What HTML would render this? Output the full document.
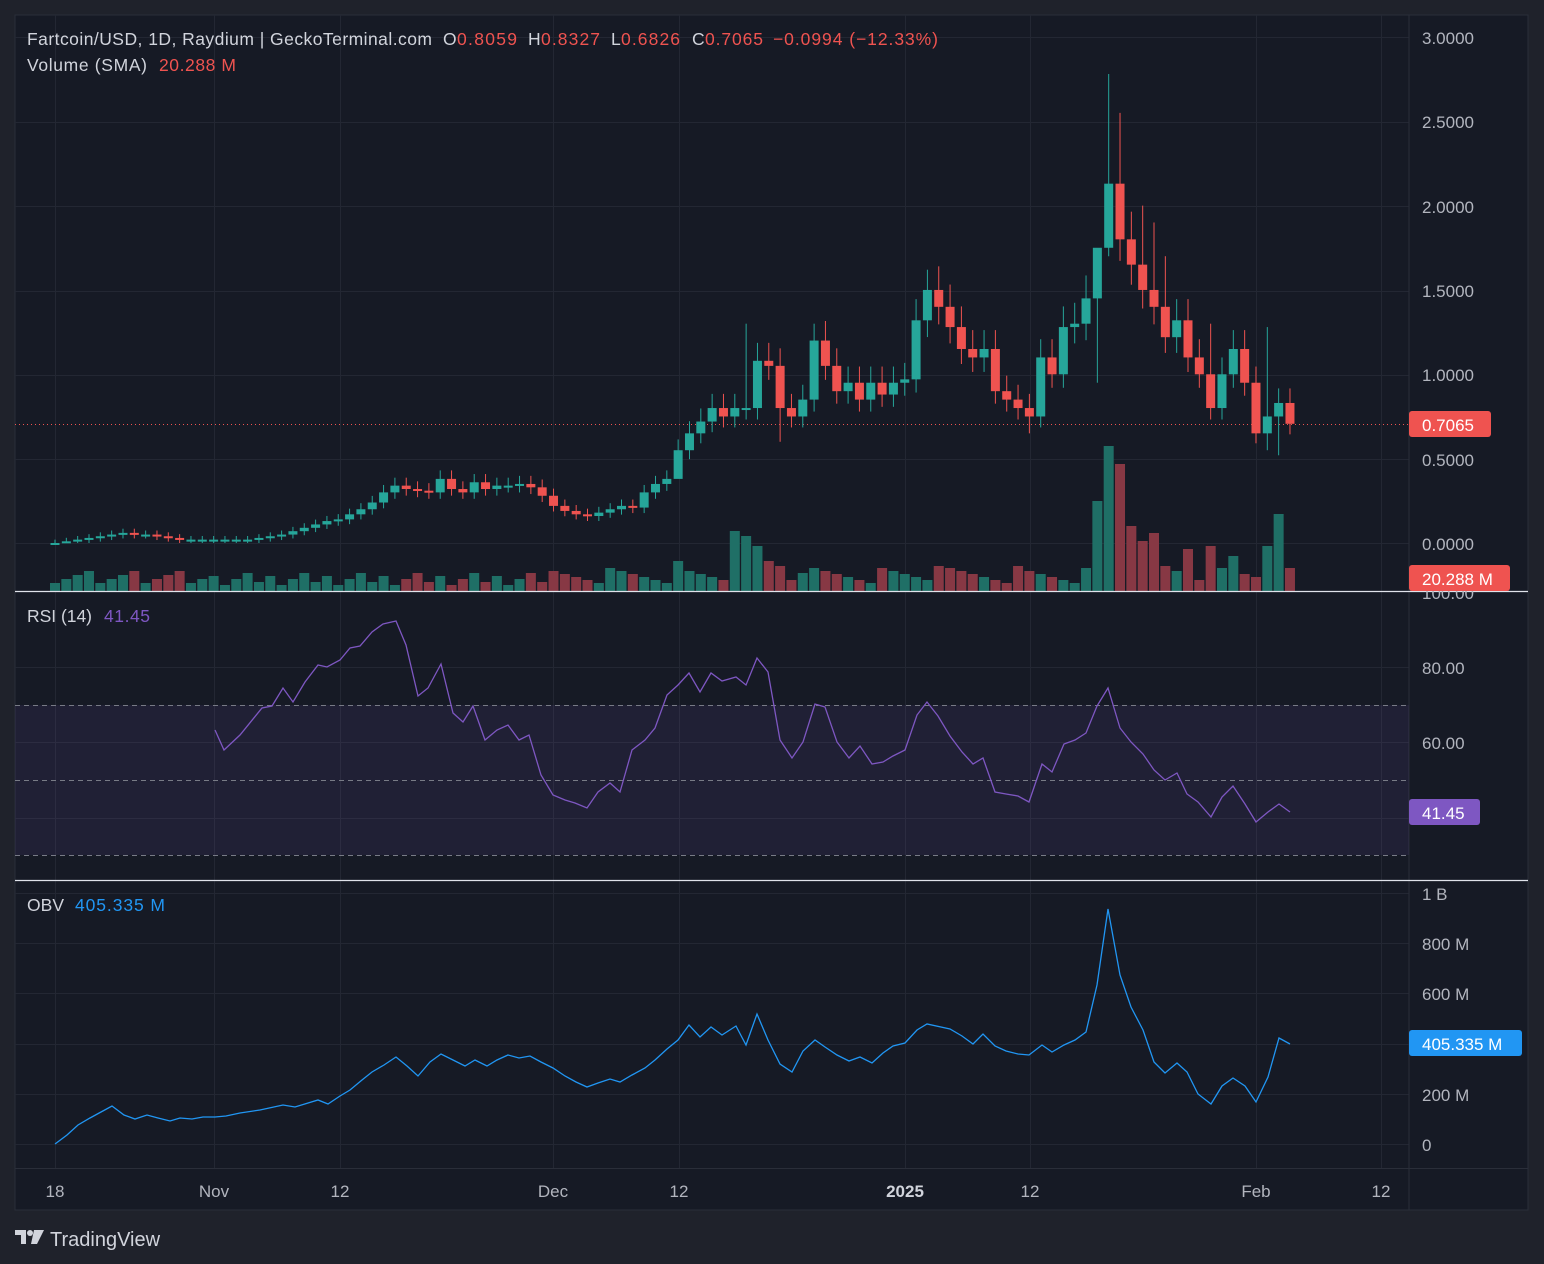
<!DOCTYPE html>
<html><head><meta charset="utf-8">
<style>
html,body{margin:0;padding:0;background:#1f222b;width:1544px;height:1264px;overflow:hidden;font-family:"Liberation Sans",Arial,sans-serif}
svg{position:absolute;left:0;top:0}
</style></head><body>
<svg id="s" width="1544" height="1264" xmlns="http://www.w3.org/2000/svg" font-family="Liberation Sans, Arial, sans-serif">
<rect x="0" y="0" width="1544" height="1264" fill="#1f222b"/>
<rect x="15" y="15" width="1513" height="1195" fill="#161a25" stroke="#2a2e39"/>
<g id="grid" stroke="#232733" stroke-width="1"></g>
<line x1="1409" y1="15" x2="1409" y2="1210" stroke="#2a2e39"/>
<line x1="15" y1="1168.5" x2="1528" y2="1168.5" stroke="#2a2e39"/>
<rect x="15" y="705" width="1394" height="150" fill="#7e57c2" fill-opacity="0.1"/>
<g stroke="#787b86" stroke-dasharray="5,4" stroke-width="1">
<line x1="15" y1="705.5" x2="1409" y2="705.5"/><line x1="15" y1="780.5" x2="1409" y2="780.5"/><line x1="15" y1="855.5" x2="1409" y2="855.5"/>
</g>
<g id="vol"></g>
<line x1="15" y1="424.5" x2="1409" y2="424.5" stroke="#ef5350" stroke-dasharray="1,3"/>
<g id="candles"></g>
<polyline id="rsi" fill="none" stroke="#7e57c2" stroke-width="1.3"/>
<polyline id="obv" fill="none" stroke="#2196f3" stroke-width="1.3"/>
<line x1="15" y1="591.5" x2="1528" y2="591.5" stroke="#e0e3eb" stroke-width="1.3"/>
<line x1="15" y1="880.5" x2="1528" y2="880.5" stroke="#e0e3eb" stroke-width="1.3"/>
<g font-size="17" fill="#b2b5be">
<text x="1422" y="44">3.0000</text><text x="1422" y="128">2.5000</text><text x="1422" y="213">2.0000</text>
<text x="1422" y="297">1.5000</text><text x="1422" y="381">1.0000</text><text x="1422" y="466">0.5000</text>
<text x="1422" y="550">0.0000</text><text x="1422" y="599">100.00</text>
<text x="1422" y="674">80.00</text><text x="1422" y="749">60.00</text>
<text x="1422" y="900">1 B</text><text x="1422" y="950">800 M</text><text x="1422" y="1000">600 M</text>
<text x="1422" y="1101">200 M</text><text x="1422" y="1151">0</text>
</g>
<rect x="1409" y="411" width="82" height="26" rx="3" fill="#ef5350"/>
<text x="1422" y="431" font-size="17" fill="#fff">0.7065</text>
<rect x="1409" y="565" width="101" height="26" rx="3" fill="#ef5350"/>
<text x="1422" y="585" font-size="17" fill="#fff">20.288 M</text>
<rect x="1409" y="799" width="71" height="26" rx="3" fill="#7e57c2"/>
<text x="1422" y="819" font-size="17" fill="#fff">41.45</text>
<rect x="1409" y="1030" width="113" height="26" rx="3" fill="#2196f3"/>
<text x="1422" y="1050" font-size="17" fill="#fff">405.335 M</text>
<g font-size="17" fill="#b2b5be" text-anchor="middle">
<text x="55" y="1197">18</text><text x="214" y="1197">Nov</text><text x="340" y="1197">12</text>
<text x="553" y="1197">Dec</text><text x="679" y="1197">12</text>
<text x="905" y="1197" font-weight="bold" fill="#d1d4dc">2025</text>
<text x="1030" y="1197">12</text><text x="1256" y="1197">Feb</text><text x="1381" y="1197">12</text>
</g>
<g font-size="17.5" fill="#d1d4dc">
<text x="27" y="45" textLength="405" lengthAdjust="spacing">Fartcoin/USD, 1D, Raydium | GeckoTerminal.com</text>
<text x="443" y="45">O</text><text x="457" y="45" fill="#ef5350" textLength="60">0.8059</text>
<text x="528" y="45">H</text><text x="541" y="45" fill="#ef5350" textLength="59">0.8327</text>
<text x="611" y="45">L</text><text x="621" y="45" fill="#ef5350" textLength="59">0.6826</text>
<text x="692" y="45">C</text><text x="705" y="45" fill="#ef5350" textLength="58">0.7065</text>
<text x="773" y="45" fill="#ef5350" textLength="165" lengthAdjust="spacing">−0.0994 (−12.33%)</text>
<text x="27" y="71" textLength="120" lengthAdjust="spacing">Volume (SMA)</text>
<text x="159" y="71" fill="#ef5350" textLength="77" lengthAdjust="spacing">20.288 M</text>
<text x="27" y="622" textLength="65" lengthAdjust="spacing">RSI (14)</text>
<text x="104" y="622" fill="#7e57c2" textLength="46">41.45</text>
<text x="27" y="911" textLength="37">OBV</text>
<text x="75" y="911" fill="#2196f3" textLength="90" lengthAdjust="spacing">405.335 M</text>
</g>
<g fill="#d1d4dc">
<path d="M15 1230h11v14h-5v-9h-6z"/>
<circle cx="30" cy="1233" r="3"/>
<path d="M34 1230h10l-7 14h-6z"/>
<text x="50" y="1246" font-size="20">TradingView</text>
</g>
</svg>
<script>
var NS="http://www.w3.org/2000/svg";
function el(p,t,a){var e=document.createElementNS(NS,t);for(var k in a)e.setAttribute(k,a[k]);p.appendChild(e);return e;}
(function(){
var gg=document.getElementById('grid');
[55,214,340,553,679,905,1030,1256,1381].forEach(function(x){el(gg,'line',{x1:x+.5,y1:15,x2:x+.5,y2:1168});});
[37,122,206,291,375,459,543,667,742,818,893,943,993,1044,1094,1144].forEach(function(y){el(gg,'line',{x1:15,y1:y+.5,x2:1409,y2:y+.5});});
var c=[0.00,0.01,0.02,0.03,0.04,0.05,0.06,0.05,0.05,0.04,0.03,0.02,0.02,0.02,
0.02,0.02,0.02,0.02,0.03,0.04,0.05,0.07,0.09,0.11,0.13,
0.14,0.17,0.20,0.24,0.30,0.34,0.32,0.31,0.30,0.38,0.32,0.30,0.36,0.32,0.34,0.34,0.35,0.33,0.28,
0.22,0.19,0.17,0.16,0.18,0.20,0.22,0.21,0.30,0.35,0.38,
0.55,0.65,0.72,0.80,0.75,0.80,0.80,1.08,1.05,0.80,0.75,0.85,1.20,1.05,0.90,0.95,0.85,0.95,0.88,0.95,
0.97,1.32,1.50,1.40,1.28,1.15,1.10,1.15,0.90,0.85,0.80,0.75,1.10,1.00,1.28,1.30,1.45,1.75,2.13,1.80,1.65,1.50,1.40,1.22,1.32,1.10,1.00,0.80,1.00,1.15,0.95,0.65,0.75,0.83,0.7065];
var hi={93:2.78,94:2.55,92:1.65,61:1.3,67:1.3,77:1.62,96:2.0,97:1.9,98:1.7,102:1.3,107:1.28};
var lo={92:0.95,93:1.7,55:0.5,64:0.6,86:0.65,107:0.55,108:0.52};
function Y(p){return 543-p*168.7;}
var cg=document.getElementById('candles'),vg=document.getElementById('vol');
var vh={93:145,94:127,92:90,95:65,96:50,97:58,98:25,99:20,100:42,102:45,104:35,107:45,108:77,60:60,61:55,62:45,63:30,64:25,55:30,56:20,66:18,78:25,85:25};
for(var i=0;i<c.length;i++){
 var x=55+i*11.33,o=i?c[i-1]:0,cl=c[i],up=cl>=o;
 var col=up?'#26a69a':'#ef5350';
 var tp=Math.max(o,cl),bt=Math.min(o,cl);
 var h=(i in hi)?hi[i]:tp+0.02+tp*0.08;
 var l=(i in lo)?lo[i]:Math.max(0,bt-0.02-bt*0.06);
 el(cg,'line',{x1:x,y1:Y(h),x2:x,y2:Y(l),stroke:col,'stroke-width':1});
 var y1=Y(tp),y2=Y(bt);if(y2-y1<2)y2=y1+2;
 el(cg,'rect',{x:x-4.5,y:y1,width:9,height:y2-y1,fill:col});
 var v=(i in vh)?vh[i]:(i<14?8+(i%4)*4:(i<44?6+((i*7)%5)*3:8+((i*5)%6)*3));
 el(vg,'rect',{x:x-5,y:591-v,width:10,height:v,fill:up?'#1f6f66':'#873844'});
}
var r=[[215,730],[224,750],[240,735],[262,708],[272,706],[283,688],[293,702],[305,682],[318,665],[327,667],[340,660],[350,648],[360,646],[372,632],[383,624],[396,621],[406,645],[418,696],[428,688],[441,664],[453,713],[463,722],[473,706],[485,740],[497,730],[508,725],[519,740],[529,735],[541,775],[553,795],[565,800],[575,803],[587,808],[598,792],[610,783],[620,792],[632,750],[645,740],[655,728],[667,695],[678,685],[689,673],[700,692],[711,673],[722,681],[736,677],[746,685],[757,658],[768,672],[780,740],[792,758],[803,742],[815,704],[825,707],[837,742],[849,758],[860,746],[872,764],[883,762],[893,756],[905,750],[917,715],[927,702],[938,716],[950,736],[962,752],[973,764],[983,758],[995,792],[1006,794],[1018,796],[1029,802],[1042,764],[1052,772],[1064,744],[1075,740],[1086,733],[1097,706],[1108,688],[1120,728],[1131,742],[1143,754],[1154,770],[1165,780],[1177,773],[1187,794],[1198,802],[1211,817],[1222,797],[1233,786],[1245,804],[1256,822],[1268,812],[1279,804],[1290,812]];
document.getElementById('rsi').setAttribute('points',r.join(' '));
var ob=[[55,1144],[67,1135],[78,1125],[90,1118],[101,1112],[112,1106],[124,1115],[135,1119],[147,1115],[158,1118],[170,1121],[180,1118],[192,1119],[203,1117],[215,1117],[226,1116],[240,1113],[260,1110],[283,1105],[295,1107],[318,1100],[328,1104],[340,1096],[350,1090],[362,1080],[372,1072],[384,1065],[396,1057],[407,1066],[418,1076],[430,1062],[441,1054],[453,1060],[465,1066],[475,1060],[487,1066],[497,1060],[508,1055],[519,1058],[530,1056],[541,1062],[553,1068],[565,1076],[576,1082],[587,1087],[598,1083],[610,1079],[620,1082],[632,1075],[645,1068],[655,1060],[667,1049],[678,1040],[689,1025],[700,1037],[711,1027],[722,1035],[736,1026],[746,1045],[757,1014],[768,1040],[780,1064],[792,1072],[803,1051],[815,1040],[825,1047],[837,1055],[849,1061],[860,1057],[872,1063],[883,1053],[893,1046],[905,1043],[917,1030],[927,1024],[950,1029],[962,1036],[973,1044],[983,1034],[995,1046],[1006,1051],[1018,1054],[1029,1055],[1042,1045],[1052,1052],[1064,1045],[1075,1040],[1086,1032],[1097,985],[1108,909],[1120,975],[1131,1007],[1143,1030],[1154,1062],[1165,1073],[1177,1063],[1187,1072],[1198,1094],[1211,1104],[1222,1086],[1233,1078],[1245,1086],[1256,1102],[1268,1077],[1279,1038],[1290,1044]];
document.getElementById('obv').setAttribute('points',ob.join(' '));
})();
</script>
</body></html>
